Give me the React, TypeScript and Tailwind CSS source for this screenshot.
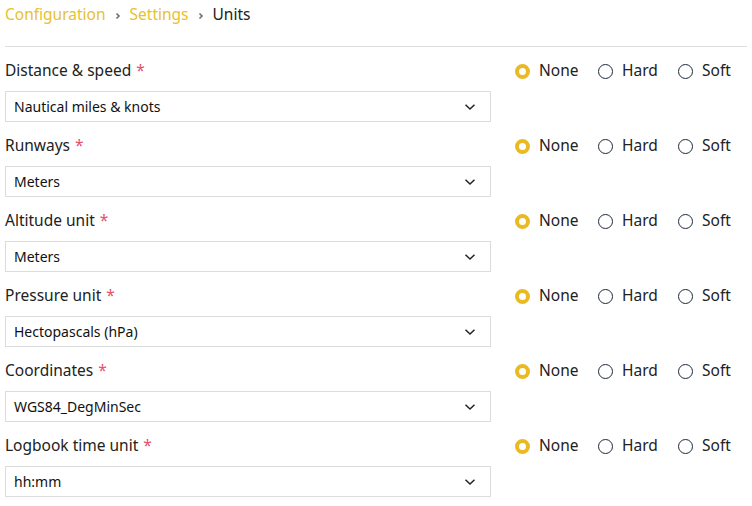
import { useState } from "react";

type Mode = "none" | "hard" | "soft";

const units: { label: string; value: string }[] = [
  { label: "Distance & speed", value: "Nautical miles & knots" },
  { label: "Runways", value: "Meters" },
  { label: "Altitude unit", value: "Meters" },
  { label: "Pressure unit", value: "Hectopascals (hPa)" },
  { label: "Coordinates", value: "WGS84_DegMinSec" },
  { label: "Logbook time unit", value: "hh:mm" },
];

const modes: { value: Mode; label: string; width: string }[] = [
  { value: "none", label: "None", width: "w-[83px]" },
  { value: "hard", label: "Hard", width: "w-[80px]" },
  { value: "soft", label: "Soft", width: "w-[60px]" },
];

function Crumb() {
  return (
    <svg width="8" height="8" viewBox="0 0 8 8" className="mx-[8px] mt-[2px]">
      <path d="M2.5 1.5 L5 4 L2.5 6.5" fill="none" stroke="#6b6e73" strokeWidth="1.6" />
    </svg>
  );
}

function Radio({ checked }: { checked: boolean }) {
  return checked ? (
    <span className="h-[15px] w-[15px] shrink-0 rounded-full border-[4px] border-[#e9ba22] bg-white" />
  ) : (
    <span className="h-[15px] w-[15px] shrink-0 rounded-full border border-[#1d2838] bg-white" />
  );
}

function UnitRow({ label, value }: { label: string; value: string }) {
  const [mode, setMode] = useState<Mode>("none");
  return (
    <div className="flex h-[75px]">
      <div className="w-[486px] shrink-0">
        <div className="flex h-[26px] items-center text-[15.5px] text-[#222]">
          {label}
          <span className="ml-[5px] text-[#e6506a]">*</span>
        </div>
        <div className="mt-[7px] flex h-[31px] items-center justify-between border border-[#dcdcdc] pl-[8px] pr-[14px] text-[14px] text-[#111]">
          <span>{value}</span>
          <svg width="12" height="8" viewBox="0 0 12 8">
            <path d="M1.5 1.8 L6 6 L10.5 1.8" fill="none" stroke="#222" strokeWidth="1.5" />
          </svg>
        </div>
      </div>
      <div className="ml-[24px] flex h-[26px] items-center">
        {modes.map((m) => (
          <label
            key={m.value}
            onClick={() => setMode(m.value)}
            className={`flex cursor-pointer items-center gap-[9px] text-[15.5px] text-[#222] ${m.width}`}
          >
            <Radio checked={mode === m.value} />
            {m.label}
          </label>
        ))}
      </div>
    </div>
  );
}

export default function App() {
  return (
    <div
      className="min-h-[506px] bg-white px-[5px]"
      style={{ fontFamily: '"Noto Sans", "Open Sans", sans-serif' }}
    >
      {/* Breadcrumb */}
      <div className="flex h-[30px] items-center text-[15.5px]">
        <span className="text-[#e8c130]">Configuration</span>
        <Crumb />
        <span className="text-[#e8c130]">Settings</span>
        <Crumb />
        <span className="text-[#222]">Units</span>
      </div>
      <div className="mt-[16px] h-px bg-[#dedede]" />

      {/* Units */}
      <div className="pt-[11px]">
        {units.map((u) => (
          <UnitRow key={u.label} label={u.label} value={u.value} />
        ))}
      </div>
    </div>
  );
}
